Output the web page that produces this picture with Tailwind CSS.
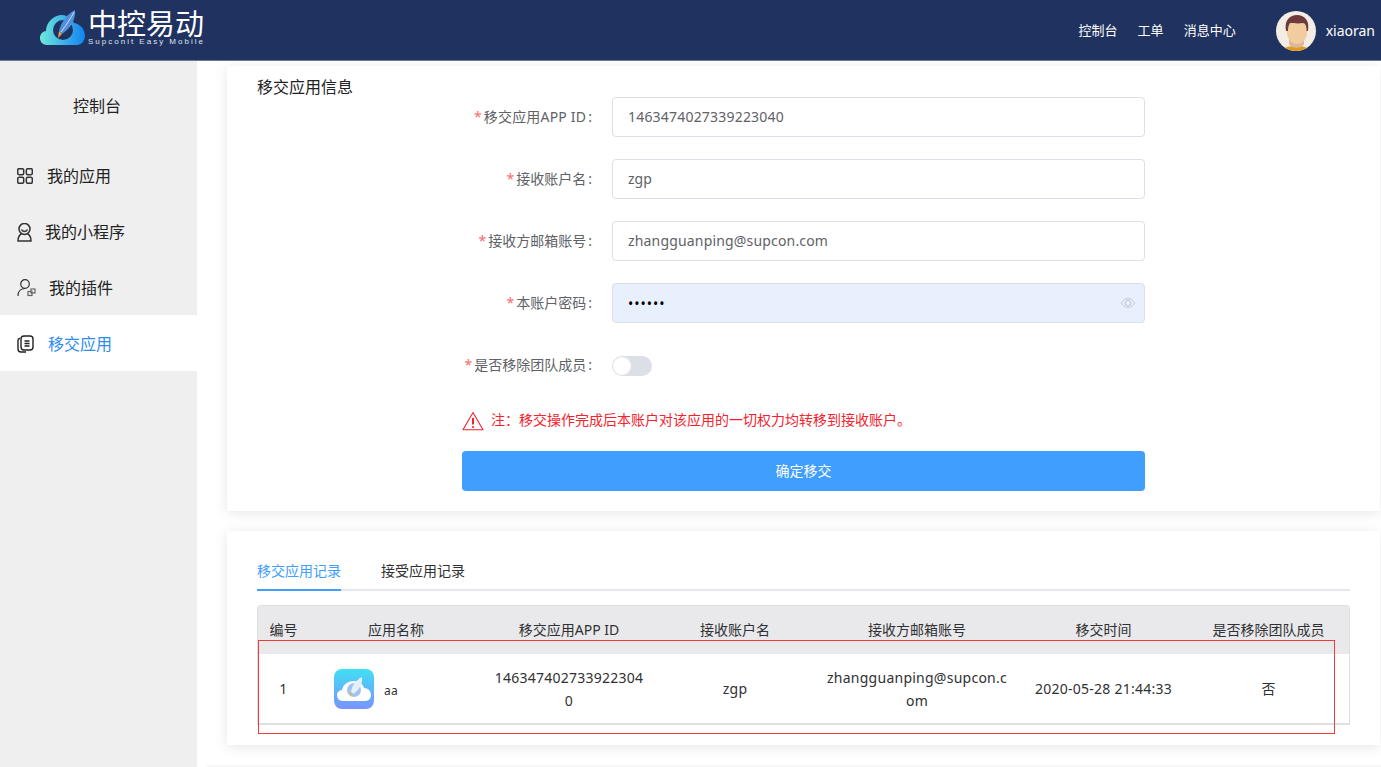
<!DOCTYPE html>
<html lang="zh">
<head>
    <meta charset="UTF-8">
    <title>移交应用</title>
    <script src="https://cdn.jsdelivr.net/npm/@tailwindcss/browser@4"></script>
</head>
<body class="h-[767px] overflow-hidden bg-white text-[14px] text-[#303133] font-['Noto_Sans','Noto_Sans_CJK_SC',sans-serif]">
    <!-- top bar -->
    <header class="h-[61px] bg-[#203360] border-b border-[#6b7a94] flex items-center text-white">
        <div class="flex items-center ml-[40px] gap-[3px]">
            <svg class="w-[45px] h-[40px]" viewBox="0 0 45 40">
                <defs>
                    <linearGradient id="cloud" x1="0" x2="1" y1="0" y2="0">
                        <stop offset="0" stop-color="#6ee8dc"/>
                        <stop offset="1" stop-color="#1283f0"/>
                    </linearGradient>
                </defs>
                <path d="M7 35 C2 35 0 31 0 28 C0 24 3 21 6 21 C6 12 14 5 22 5 C28 5 32 9 34 13 C40 14 45 19 45 26 C45 31 41 35 37 35 Z" fill="url(#cloud)"/>
                <circle cx="23" cy="20" r="10" fill="#203360"/>
                <path d="M35 0 C36 9 31 18 22 24 L19 21 C21 12 27 4 35 0 Z" fill="#4f8fdc"/>
                <path d="M34 2 C31 8 27 14 21 22" stroke="#cfe2f5" stroke-width="1" fill="none"/>
                <path d="M19 21 L22 24 L18 28 Z" fill="#e8a23a"/>
            </svg>
            <div class="flex flex-col -mt-[5px]">
                <span class="text-[29px] leading-[28px] tracking-[0px]">中控易动</span>
                <span class="text-[8px] leading-[8px] tracking-[2px] text-[#dfe5ee] font-['Liberation_Sans',sans-serif]">Supconit Easy Mobile</span>
            </div>
        </div>
        <nav class="ml-auto flex items-center gap-[20px] text-[13px] pt-[1px]">
            <span>控制台</span>
            <span>工单</span>
            <span>消息中心</span>
        </nav>
        <svg class="w-[40px] h-[40px] ml-[40px] mt-[1px]" viewBox="0 0 40 40">
            <clipPath id="av"><circle cx="20" cy="20" r="20"/></clipPath>
            <g clip-path="url(#av)">
                <rect width="40" height="40" fill="#f4ede4"/>
                <path d="M5 40 C8 36 14 35 20 35 C26 35 32 36 35 40 Z" fill="#e09a1e"/>
                <path d="M13 27 H28 V33 C26 38 15 38 13 33 Z" fill="#dcb898"/>
                <path d="M11 14 C11 8 31 8 31 14 V22 C31 29 25 33 21 33 C17 33 11 29 11 22 Z" fill="#f0cc9f"/>
                <path d="M10 20 C8 9 14 4 21 4 C28 4 34 9 32 20 L30.500 20 C31 15 29 12 27 12 C22 13 17 12 14 12 C12 15 12 18 12 20 Z" fill="#6f3a3c"/>
            </g>
        </svg>
        <span class="ml-[10px] mr-[6px] text-[14px]">xiaoran</span>
    </header>

    <div class="flex h-[706px] overflow-hidden">
        <!-- side menu -->
        <aside class="w-[197px] shrink-0 bg-[#efefef] text-[16px] text-[#222]">
            <div class="h-[86px] pt-[5px] pb-[1px] pr-[3px] flex items-center justify-center">控制台</div>
            <div class="h-[56px] pt-[2px] flex items-center pl-[17px] gap-[14px]">
                <svg class="w-[16px] h-[16px]" viewBox="0 0 16 16" fill="none" stroke="#333" stroke-width="1.500">
                    <rect x="0.700" y="0.700" width="6" height="6" rx="1.500"/>
                    <rect x="9.300" y="0.700" width="6" height="6" rx="1.500"/>
                    <rect x="0.700" y="9.300" width="6" height="6" rx="1.500"/>
                    <rect x="9.300" y="9.300" width="6" height="6" rx="1.500"/>
                </svg>
                <span>我的应用</span>
            </div>
            <div class="h-[56px] pt-[2px] flex items-center pl-[17px] gap-[13px]">
                <svg class="w-[15px] h-[19px]" viewBox="0 0 15 19" fill="none" stroke="#333" stroke-width="1.500">
                    <circle cx="7.500" cy="6" r="5.500"/>
                    <path d="M4.500 6.500 C5.500 9 9.500 9 10.500 6.500"/>
                    <path d="M4.500 11 C2 12 1 14 1 18 H14 C14 14 13 12 10.500 11"/>
                </svg>
                <span>我的小程序</span>
            </div>
            <div class="h-[56px] pt-[2px] flex items-center pl-[17px] gap-[13px]">
                <svg class="w-[19px] h-[18px]" viewBox="0 0 19 18" fill="none" stroke="#333" stroke-width="1.200">
                    <circle cx="8" cy="5" r="4.300"/>
                    <path d="M1 17 C1 12 4 9.500 8 9.500"/>
                    <rect x="11" y="12.500" width="4" height="4" stroke="#666"/>
                    <rect x="14" y="10" width="4" height="4" stroke="#666"/>
                </svg>
                <span>我的插件</span>
            </div>
            <div class="h-[56px] pt-[2px] bg-white flex items-center pl-[17px] gap-[14px] text-[#2d8cf0]">
                <svg class="w-[17px] h-[18px]" viewBox="0 0 17 18" fill="none" stroke="#222" stroke-width="1.400">
                    <path d="M3 3.500 C1.500 3.500 1 4.500 1 5.500 V14 C1 16 2 17 4 17 H9"/>
                    <rect x="4" y="1" width="12" height="14" rx="3"/>
                    <path d="M7.500 6 H12.500 M7.500 8.500 H12.500 M7.500 11 H12.500"/>
                </svg>
                <span>移交应用</span>
            </div>
        </aside>

        <!-- content -->
        <main class="relative flex-1 pl-[30px] pt-[5px]">
            <section class="w-[1153px] bg-white shadow-[0_2px_12px_rgba(0,0,0,0.1)] px-[30px] pb-[20px]">
                <h2 class="h-[31px] pt-[9px] leading-[24px] text-[16px] text-[#222]">移交应用信息</h2>
                <form class="w-[683px] ml-[205px] text-[#606266]">
                    <div class="flex items-center mb-[22px]">
                        <label class="w-[130px] pb-[2px] text-right mr-[20px]"><span class="text-[#f56c6c] mr-[2px]">*</span><span class="tracking-[0.200px]">移交应用APP ID</span><span class="ml-[2px]">:</span></label>
                        <div class="flex-1 h-[40px] pb-[2px] border border-[#dcdfe6] rounded-[4px] px-[15px] flex items-center tracking-[0.200px]">1463474027339223040</div>
                    </div>
                    <div class="flex items-center mb-[22px]">
                        <label class="w-[130px] pb-[2px] text-right mr-[20px]"><span class="text-[#f56c6c] mr-[2px]">*</span>接收账户名<span class="ml-[2px]">:</span></label>
                        <div class="flex-1 h-[40px] pb-[2px] border border-[#dcdfe6] rounded-[4px] px-[15px] flex items-center">zgp</div>
                    </div>
                    <div class="flex items-center mb-[22px]">
                        <label class="w-[130px] pb-[2px] text-right mr-[20px]"><span class="text-[#f56c6c] mr-[2px]">*</span>接收方邮箱账号<span class="ml-[2px]">:</span></label>
                        <div class="flex-1 h-[40px] pb-[2px] border border-[#dcdfe6] rounded-[4px] px-[15px] flex items-center tracking-[0.170px]">zhangguanping@supcon.com</div>
                    </div>
                    <div class="flex items-center mb-[22px]">
                        <label class="w-[130px] pb-[2px] text-right mr-[20px]"><span class="text-[#f56c6c] mr-[2px]">*</span>本账户密码<span class="ml-[2px]">:</span></label>
                        <div class="flex-1 h-[40px] border border-[#dcdfe6] rounded-[4px] bg-[#e8f0fe] pl-[15px] pr-[9px] flex items-center justify-between">
                            <span class="text-black tracking-[1px]">••••••</span>
                            <svg class="w-[14px] h-[10px]" viewBox="0 0 14 10" fill="none" stroke="#c0c4cc" stroke-width="1">
                                <path d="M0.500 5 C3 1 5 0.500 7 0.500 C9 0.500 11 1 13.500 5 C11 9 9 9.500 7 9.500 C5 9.500 3 9 0.500 5 Z"/>
                                <circle cx="7" cy="5" r="2.800"/>
                            </svg>
                        </div>
                    </div>
                    <div class="flex items-center h-[40px]">
                        <label class="w-[130px] pb-[2px] text-right mr-[20px]"><span class="text-[#f56c6c] mr-[2px]">*</span>是否移除团队成员<span class="ml-[2px]">:</span></label>
                        <div class="relative w-[40px] h-[20px] mt-[2px] rounded-full bg-[#dcdfe6]">
                            <div class="absolute left-[1px] top-[1px] w-[18px] h-[18px] rounded-full bg-white"></div>
                        </div>
                    </div>
                    <div class="flex items-center h-[66px] text-[#f5222d]">
                        <svg class="w-[22px] h-[20px] mr-[7px] mt-[6px]" viewBox="0 0 22 20" fill="none" stroke="#f5222d" stroke-width="1.100">
                            <path d="M11 1.500 L21 18.800 H1 Z" stroke-linejoin="round"/>
                            <path d="M11 7 V13.500" stroke-width="2"/>
                            <circle cx="11" cy="16" r="1.100" fill="#f5222d" stroke="none"/>
                        </svg>
                        <span class="mt-[2px]">注：移交操作完成后本账户对该应用的一切权力均转移到接收账户。</span>
                    </div>
                    <button type="button" class="w-full h-[40px] pb-[2px] rounded-[4px] bg-[#409eff] text-white text-[14px]">确定移交</button>
                </form>
            </section>

            <section class="w-[1153px] h-[214px] mt-[20px] bg-white shadow-[0_2px_12px_rgba(0,0,0,0.1)] px-[30px] pt-[28px]">
                <div class="flex h-[32px] border-b-2 border-[#e4e7ed] gap-[40px]">
                    <span class="h-[32px] border-b-2 border-[#409eff] text-[#409eff] leading-[24px]">移交应用记录</span>
                    <span class="leading-[24px] text-[#303133]">接受应用记录</span>
                </div>
                <div class="mt-[14px] border border-[#dfdfe1] border-b-0 rounded-t-[4px] overflow-hidden">
                    <table class="w-full table-fixed text-center text-[#303133]">
                        <thead class="bg-[#e9e9eb]">
                            <tr class="h-[48px]">
                                <th class="w-[51px] pb-[2px] font-normal">编号</th>
                                <th class="w-[174px] pb-[2px] font-normal">应用名称</th>
                                <th class="w-[172px] pb-[2px] font-normal">移交应用APP ID</th>
                                <th class="w-[160px] pb-[2px] font-normal">接收账户名</th>
                                <th class="w-[204px] pb-[2px] font-normal">接收方邮箱账号</th>
                                <th class="w-[169px] pb-[2px] font-normal">移交时间</th>
                                <th class="pb-[2px] font-normal">是否移除团队成员</th>
                            </tr>
                        </thead>
                        <tbody class="tracking-[0.250px]">
                            <tr class="h-[70px] border-b-2 border-[#dfdfe1]">
                                <td>1</td>
                                <td>
                                    <div class="flex items-center pl-[25px] gap-[10px]">
                                        <svg class="w-[40px] h-[40px]" viewBox="0 0 40 40">
                                            <defs>
                                                <linearGradient id="app" x1="0" x2="0" y1="0" y2="1">
                                                    <stop offset="0" stop-color="#3fe0f2"/>
                                                    <stop offset="1" stop-color="#7a93ff"/>
                                                </linearGradient>
                                            </defs>
                                            <rect width="40" height="40" rx="8" fill="url(#app)"/>
                                            <path d="M9 32 C5 32 3 29 3 26 C3 23 6 21 8 21 C9 15 15 12 20 12 C25 12 29 15 30 19 C34 19 37 22 37 26 C37 29 35 32 31 32 Z" fill="#fff"/>
                                            <circle cx="20" cy="21" r="7" fill="#9fc3f2"/>
                                            <path d="M28 8 C29 15 25 21 19 25 L17 23 C18 16 22 11 28 8 Z" fill="#e4f0fb"/>
                                            <path d="M17 23 L19 25 L16 27.500 Z" fill="#e8b04a"/>
                                        </svg>
                                        <span class="text-[12px] mt-[4px]">aa</span>
                                    </div>
                                </td>
                                <td class="px-[10px] break-all leading-[23px]">1463474027339223040</td>
                                <td>zgp</td>
                                <td class="px-[10px] break-all leading-[23px]">zhangguanping@supcon.com</td>
                                <td>2020-05-28 21:44:33</td>
                                <td>否</td>
                            </tr>
                        </tbody>
                    </table>
                </div>
            </section>
            <div class="w-[1174px] h-[10px] -ml-[20px] mt-[20px] bg-[#f7f7f7]"></div>

            <!-- red annotation drawn over the screenshot -->
            <div class="absolute left-[61px] top-[579px] w-[1077px] h-[94px] border border-[#f03c3c]"></div>
        </main>
    </div>
</body>
</html>
